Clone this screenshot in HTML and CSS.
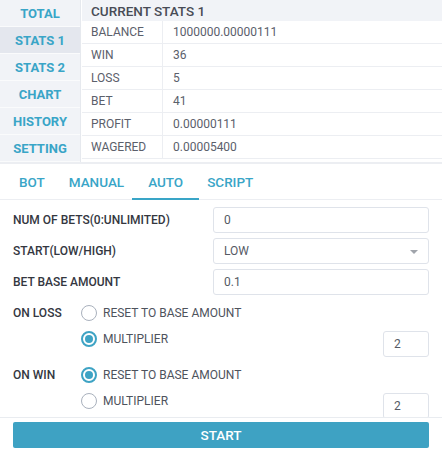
FILE: index.html
```html
<!DOCTYPE html>
<html>
<head>
<meta charset="utf-8">
<link rel="stylesheet" href="styles.css">
</head>
<body>
<div class="top">
  <nav class="side">
    <div class="side-item">TOTAL</div>
    <div class="side-item active">STATS 1</div>
    <div class="side-item">STATS 2</div>
    <div class="side-item">CHART</div>
    <div class="side-item">HISTORY</div>
    <div class="side-item">SETTING</div>
  </nav>
  <div class="stats">
    <div class="stats-head">CURRENT STATS 1</div>
    <div class="stats-row"><div class="k">BALANCE</div><div class="v">1000000.00000111</div></div>
    <div class="stats-row"><div class="k">WIN</div><div class="v">36</div></div>
    <div class="stats-row"><div class="k">LOSS</div><div class="v">5</div></div>
    <div class="stats-row"><div class="k">BET</div><div class="v">41</div></div>
    <div class="stats-row"><div class="k">PROFIT</div><div class="v">0.00000111</div></div>
    <div class="stats-row"><div class="k">WAGERED</div><div class="v">0.00005400</div></div>
  </div>
</div>
<div class="tabs">
  <div class="tab">BOT</div>
  <div class="tab">MANUAL</div>
  <div class="tab active">AUTO</div>
  <div class="tab">SCRIPT</div>
</div>
<div class="form">
  <div class="field">
    <div class="label">NUM OF BETS(0:UNLIMITED)</div>
    <div class="input">0</div>
  </div>
  <div class="field">
    <div class="label">START(LOW/HIGH)</div>
    <div class="input select">LOW<span class="caret"></span></div>
  </div>
  <div class="field">
    <div class="label">BET BASE AMOUNT</div>
    <div class="input">0.1</div>
  </div>
  <div class="group">
    <div class="label glabel">ON LOSS</div>
    <div class="options">
      <div class="opt"><span class="radio"></span><span class="otext">RESET TO BASE AMOUNT</span></div>
      <div class="opt"><span class="radio on"></span><span class="otext">MULTIPLIER</span><div class="input small">2</div></div>
    </div>
  </div>
  <div class="group">
    <div class="label glabel">ON WIN</div>
    <div class="options">
      <div class="opt"><span class="radio on"></span><span class="otext">RESET TO BASE AMOUNT</span></div>
      <div class="opt"><span class="radio"></span><span class="otext">MULTIPLIER</span><div class="input small">2</div></div>
    </div>
  </div>
</div>
<div class="footer">
  <div class="btn">START</div>
</div>
</body>
</html>
```
FILE: styles.css
```css
* { box-sizing: border-box; }
html, body { margin: 0; padding: 0; background: #fff; }
body {
  font-family: Roboto, "Liberation Sans", sans-serif;
  font-size: 12px;
  color: #3b3e46;
  width: 442px;
  height: 459px;
  overflow: hidden;
}
.top {
  display: flex;
  height: 164px;
  border-bottom: 2px solid #eceef2;
}
.side {
  width: 81px;
  background: #fafbfc;
  border-right: 1px solid #e6e9ee;
  display: flex;
  flex-direction: column;
  gap: 1px;
}
.side-item {
  height: 26px;
  background: #f1f3f7;
  color: #39a5c7;
  font-weight: 700;
  font-size: 13px;
  display: flex;
  align-items: center;
  justify-content: center;
}
.side-item.active { background: #e4e7ee; }
.stats {
  flex: 1;
  margin-left: 1px;
}
.stats-head {
  height: 21px;
  background: #f1f3f7;
  font-weight: 500;
  font-size: 13.5px;
  color: #484c56;
  padding-left: 9px;
  display: flex;
  align-items: center;
}
.stats-row {
  display: flex;
  height: 23px;
  border-bottom: 1px solid #eceef2;
  color: #5b606b;
}
.stats-row .k {
  width: 81px;
  padding-left: 9px;
  border-right: 1px solid #eceef2;
  display: flex;
  align-items: center;
}
.stats-row .v {
  padding-left: 10px;
  display: flex;
  align-items: center;
}
.tabs {
  display: flex;
  height: 36px;
  border-bottom: 1px solid #eceef2;
  padding-left: 19px;
  gap: 24px;
}
.tab {
  position: relative;
  font-size: 13.5px;
  font-weight: 500;
  color: #39a5c7;
  display: flex;
  align-items: center;
}
.tab.active::after {
  content: "";
  position: absolute;
  left: -16px;
  right: -16px;
  bottom: -1px;
  height: 2px;
  background: #39a5c7;
}
.form {
  padding: 7px 13px 0 13px;
}
.field {
  display: flex;
  align-items: center;
  justify-content: space-between;
  margin-bottom: 5px;
}
.label {
  font-weight: 500;
  color: #34373f;
}
.input {
  width: 216px;
  height: 26px;
  border: 1px solid #dfe3ea;
  border-radius: 3px;
  padding-left: 10px;
  display: flex;
  align-items: center;
  color: #555a64;
  position: relative;
}
.select .caret {
  position: absolute;
  right: 10px;
  top: 11px;
  border-left: 4px solid transparent;
  border-right: 4px solid transparent;
  border-top: 4px solid #a0a4ab;
}
.group {
  display: flex;
  margin-top: 10px;
}
.glabel {
  width: 68px;
  line-height: 16px;
}
.options {
  flex: 1;
  display: flex;
  flex-direction: column;
  gap: 10px;
}
.opt {
  display: flex;
  align-items: flex-start;
}
.radio {
  width: 16px;
  height: 16px;
  border-radius: 50%;
  border: 1.5px solid #a9b1bd;
  background: #fff;
  flex: none;
  position: relative;
}
.radio.on { border: 2px solid #3ea3c4; }
.radio.on::after {
  content: "";
  position: absolute;
  left: 2px;
  top: 2px;
  width: 8px;
  height: 8px;
  border-radius: 50%;
  background: #3ea3c4;
}
.otext {
  margin-left: 6px;
  line-height: 16px;
  color: #4e535d;
}
.input.small {
  width: 46px;
  margin-left: auto;
}
.footer {
  position: fixed;
  left: 0;
  right: 0;
  bottom: 0;
  height: 42px;
  background: #fff;
  border-top: 1px solid #e9ecf0;
  padding: 4px 13px 0 13px;
}
.btn {
  height: 26px;
  background: #3ea2c3;
  border-radius: 2px;
  color: #fff;
  font-size: 13.5px;
  font-weight: 500;
  display: flex;
  align-items: center;
  justify-content: center;
}
```
